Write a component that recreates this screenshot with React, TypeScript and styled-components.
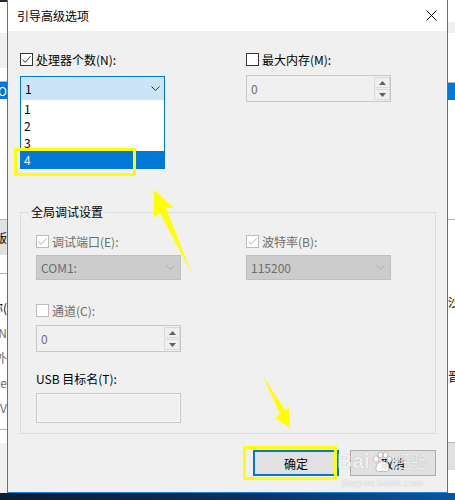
import React from 'react';
import styled, { createGlobalStyle } from 'styled-components';

const GlobalStyle = createGlobalStyle`
  html, body {
    margin: 0;
    padding: 0;
    background: #fff;
  }
  body {
    font-family: "Noto Sans CJK SC", "Noto Sans", sans-serif;
    font-size: 12px;
    color: #000;
  }
`;

const Screen = styled.div`
  position: relative;
  width: 455px;
  height: 500px;
  overflow: hidden;
  display: grid;
  grid-template-columns: 7px 441px 7px;
  grid-template-rows: 493px 7px;
  background: #fff;
`;

type Tone = 'white' | 'panel' | 'gray' | 'blue' | 'dark' | 'line';

const toneBg: Record<Tone, string> = {
  white: '#ffffff',
  panel: '#f0f0f0',
  gray: '#e1e1e1',
  blue: '#0078d7',
  dark: '#1d2b3c',
  line: '#b4b4b4',
};

const Strip = styled.div<{ $side: 'left' | 'right' }>`
  display: flex;
  flex-direction: column;
  overflow: hidden;
  align-items: ${(p) => (p.$side === 'left' ? 'flex-end' : 'flex-start')};
`;

const Band = styled.div<{ $h: number; $tone: Tone; $muted?: boolean }>`
  flex: none;
  width: 30px;
  height: ${(p) => p.$h}px;
  background: ${(p) => toneBg[p.$tone]};
  display: flex;
  align-items: center;
  justify-content: inherit;
  white-space: nowrap;
  font-size: 12px;
  line-height: 14px;
  color: ${(p) => (p.$tone === 'blue' ? '#fff' : p.$muted ? '#6d6d6d' : '#000')};
`;

const LeftBand = styled(Band)`
  justify-content: flex-end;
`;

const Taskbar = styled.div`
  grid-column: 1 / -1;
  background: linear-gradient(90deg, #0a1d36 0%, #0c2f5c 50%, #0a56a0 100%);
`;

const Dialog = styled.div`
  display: flex;
  flex-direction: column;
  border: 1px solid #1883d7;
  border-top: none;
  min-height: 0;
`;

const TitleBar = styled.div`
  height: 31px;
  flex: none;
  background: #fff;
  display: flex;
  align-items: center;
  justify-content: space-between;
  padding: 0 10px 0 9px;
`;

const Title = styled.span`
  font-size: 12px;
  line-height: 16px;
`;

const Body = styled.div`
  position: relative;
  flex: 1;
  background: #f0f0f0;
  padding: 22px 11px 0 12px;
  display: flex;
  flex-direction: column;
`;

const TwoCols = styled.div<{ $gap: number }>`
  display: grid;
  grid-template-columns: 145px 145px;
  column-gap: ${(p) => p.$gap}px;
  align-items: start;
`;

const Field = styled.div<{ $gap: number; $top?: number }>`
  display: flex;
  flex-direction: column;
  gap: ${(p) => p.$gap}px;
  margin-top: ${(p) => p.$top ?? 0}px;
  width: 145px;
`;

const CheckRow = styled.label<{ $disabled?: boolean }>`
  display: flex;
  align-items: center;
  gap: 3px;
  height: 13px;
  line-height: 14px;
  white-space: nowrap;
  color: ${(p) => (p.$disabled ? '#6d6d6d' : '#000')};
`;

const Box = styled.span<{ $disabled?: boolean }>`
  box-sizing: border-box;
  width: 13px;
  height: 13px;
  flex: none;
  background: #fff;
  border: 1px solid ${(p) => (p.$disabled ? '#bcbcbc' : '#333')};
  display: grid;
  place-items: center;
`;

const Combo = styled.div<{ $open?: boolean; $disabled?: boolean }>`
  position: relative;
  box-sizing: border-box;
  height: 25px;
  display: flex;
  align-items: center;
  justify-content: space-between;
  padding: 0 ${(p) => (p.$disabled ? 5 : 4)}px 0 4px;
  background: ${(p) => (p.$open ? '#cce4f7' : p.$disabled ? '#cccccc' : '#e1e1e1')};
  border: 1px solid ${(p) => (p.$open ? '#0078d7' : p.$disabled ? '#bfbfbf' : '#adadad')};
  color: ${(p) => (p.$disabled ? '#6d6d6d' : '#000')};
  font-size: 12px;
`;

const DropList = styled.ul`
  position: absolute;
  left: -1px;
  right: -1px;
  top: 100%;
  margin: 0;
  padding: 0;
  list-style: none;
  background: #fff;
  border: 1px solid #0078d7;
  border-top: none;
  z-index: 2;
`;

const DropItem = styled.li<{ $selected?: boolean }>`
  height: 17px;
  line-height: 17px;
  padding-left: 3px;
  background: ${(p) => (p.$selected ? '#0078d7' : '#fff')};
  color: ${(p) => (p.$selected ? '#fff' : '#000')};
`;

const Spin = styled.div<{ $h: number }>`
  box-sizing: border-box;
  height: ${(p) => p.$h}px;
  display: flex;
  align-items: stretch;
  background: #f0f0f0;
  border: 1px solid #c8c8c8;
  color: #6d6d6d;
`;

const SpinValue = styled.span`
  flex: 1;
  display: flex;
  align-items: center;
  padding-left: 4px;
`;

const SpinButtons = styled.div`
  width: 16px;
  display: flex;
  flex-direction: column;
  gap: 1px;
  padding: 1px 0 1px 0;
`;

const SpinButton = styled.div`
  flex: 1;
  box-sizing: border-box;
  border: 1px solid #dadada;
  display: grid;
  place-items: center;
`;

const GroupBox = styled.div`
  position: relative;
  margin-top: 110px;
  border: 1px solid #dcdcdc;
  padding: 22px 0 10px 15px;
  display: flex;
  flex-direction: column;
`;

const GroupTitle = styled.span`
  position: absolute;
  top: -9px;
  left: 8px;
  padding: 0 2px;
  background: #f0f0f0;
  line-height: 16px;
`;

const PlainLabel = styled.span`
  height: 14px;
  line-height: 14px;
  white-space: nowrap;
`;

const TextBox = styled.div`
  box-sizing: border-box;
  height: 30px;
  background: #f0f0f0;
  border: 1px solid #c8c8c8;
  box-shadow: inset 0 0 0 1px #f7f7f7;
`;

const ButtonRow = styled.div`
  display: flex;
  justify-content: flex-end;
  gap: 11px;
  margin-top: 16px;
`;

const Button = styled.button<{ $default?: boolean }>`
  box-sizing: border-box;
  width: 86px;
  height: 26px;
  padding: 0;
  background: #e1e1e1;
  border: ${(p) => (p.$default ? '2px solid #0078d7' : '1px solid #adadad')};
  font-family: inherit;
  font-size: 12px;
  color: #000;
`;

const Annotations = styled.svg`
  position: absolute;
  left: 0;
  top: 0;
  pointer-events: none;
  z-index: 5;
`;

const Watermark = styled.div`
  position: absolute;
  left: 337px;
  top: 449px;
  display: flex;
  flex-direction: column;
  align-items: center;
  color: rgba(255, 255, 255, 0.85);
  text-shadow: 0 0 1px rgba(0, 0, 0, 0.3);
  pointer-events: none;
  z-index: 4;
`;

const MarkLogo = styled.div`
  display: flex;
  align-items: flex-end;
  gap: 1px;
  font-family: "Liberation Sans", sans-serif;
  font-size: 21px;
  font-weight: bold;
  line-height: 24px;
`;

const MarkCn = styled.span`
  font-family: "Noto Sans CJK SC", sans-serif;
  font-size: 17px;
  font-weight: normal;
`;

const MarkUrl = styled.div`
  font-family: "Liberation Serif", serif;
  font-size: 11px;
  line-height: 12px;
  margin-top: 3px;
`;

const Check = ({ disabled }: { disabled?: boolean }) => (
  <svg width="11" height="11" viewBox="0 0 11 11">
    <path d="M1.5 5.5 L4.2 8.3 L9.6 2.2" fill="none" stroke={disabled ? '#bcbcbc' : '#3c3c3c'} strokeWidth="1" />
  </svg>
);

const Chevron = ({ color }: { color: string }) => (
  <svg width="9" height="5" viewBox="0 0 9 5">
    <path d="M0.5 0.5 L4.5 4.5 L8.5 0.5" fill="none" stroke={color} strokeWidth="1" />
  </svg>
);

const Tri = ({ up }: { up?: boolean }) => (
  <svg width="7" height="4" viewBox="0 0 7 4">
    <polygon points={up ? '0,4 3.5,0 7,4' : '0,0 3.5,4 7,0'} fill="#606060" />
  </svg>
);

const SpinBox = ({ h }: { h: number }) => (
  <Spin $h={h}>
    <SpinValue>0</SpinValue>
    <SpinButtons>
      <SpinButton>
        <Tri up />
      </SpinButton>
      <SpinButton>
        <Tri />
      </SpinButton>
    </SpinButtons>
  </Spin>
);

const leftBands: { h: number; tone: Tone; text?: string; muted?: boolean }[] = [
  { h: 2, tone: 'dark' },
  { h: 31, tone: 'white' },
  { h: 35, tone: 'panel' },
  { h: 13, tone: 'white' },
  { h: 1, tone: 'line' },
  { h: 17, tone: 'blue', text: 'KO' },
  { h: 120, tone: 'white' },
  { h: 1, tone: 'line' },
  { h: 35, tone: 'gray', text: '版' },
  { h: 18, tone: 'white' },
  { h: 1, tone: 'line' },
  { h: 21, tone: 'white' },
  { h: 25, tone: 'white', text: '称(' },
  { h: 25, tone: 'white', text: 'N', muted: true },
  { h: 25, tone: 'white', text: '外', muted: true },
  { h: 25, tone: 'white', text: 'e', muted: true },
  { h: 25, tone: 'white', text: 'V', muted: true },
  { h: 9, tone: 'white' },
  { h: 1, tone: 'line' },
  { h: 13, tone: 'white' },
  { h: 50, tone: 'panel' },
];

const rightBands: { h: number; tone: Tone; text?: string }[] = [
  { h: 22, tone: 'white' },
  { h: 11, tone: 'panel' },
  { h: 49, tone: 'white' },
  { h: 1, tone: 'line' },
  { h: 17, tone: 'blue' },
  { h: 119, tone: 'white' },
  { h: 1, tone: 'line' },
  { h: 72, tone: 'white' },
  { h: 20, tone: 'white', text: '沙' },
  { h: 55, tone: 'white' },
  { h: 20, tone: 'white', text: '晋' },
  { h: 55, tone: 'white' },
  { h: 1, tone: 'line' },
  { h: 27, tone: 'gray' },
  { h: 23, tone: 'white' },
];

const cpuOptions = ['1', '2', '3', '4'];

function App() {
  return (
    <>
      <GlobalStyle />
      <Screen>
        <Strip $side="left">
          {leftBands.map((b, i) => (
            <LeftBand key={i} $h={b.h} $tone={b.tone} $muted={b.muted}>
              {b.text}
            </LeftBand>
          ))}
        </Strip>

        <Dialog>
          <TitleBar>
            <Title>引导高级选项</Title>
            <svg width="11" height="11" viewBox="0 0 11 11">
              <path d="M0.5 0.5 L10.5 10.5 M10.5 0.5 L0.5 10.5" stroke="#000" strokeWidth="1" />
            </svg>
          </TitleBar>

          <Body>
            <TwoCols $gap={81}>
              <Field $gap={10}>
                <CheckRow>
                  <Box>
                    <Check />
                  </Box>
                  处理器个数(N):
                </CheckRow>
                <Combo $open>
                  <span>1</span>
                  <Chevron color="#333" />
                  <DropList>
                    {cpuOptions.map((o) => (
                      <DropItem key={o} $selected={o === '4'}>
                        {o}
                      </DropItem>
                    ))}
                  </DropList>
                </Combo>
              </Field>
              <Field $gap={9}>
                <CheckRow>
                  <Box />
                  最大内存(M):
                </CheckRow>
                <SpinBox h={27} />
              </Field>
            </TwoCols>

            <GroupBox>
              <GroupTitle>全局调试设置</GroupTitle>
              <TwoCols $gap={65}>
                <Field $gap={7}>
                  <CheckRow $disabled>
                    <Box $disabled>
                      <Check disabled />
                    </Box>
                    调试端口(E):
                  </CheckRow>
                  <Combo $disabled>
                    <span>COM1:</span>
                    <Chevron color="#a8a8a8" />
                  </Combo>
                </Field>
                <Field $gap={7}>
                  <CheckRow $disabled>
                    <Box $disabled>
                      <Check disabled />
                    </Box>
                    波特率(B):
                  </CheckRow>
                  <Combo $disabled>
                    <span>115200</span>
                    <Chevron color="#a8a8a8" />
                  </Combo>
                </Field>
              </TwoCols>

              <Field $gap={8} $top={24}>
                <CheckRow $disabled>
                  <Box $disabled />
                  通道(C):
                </CheckRow>
                <SpinBox h={27} />
              </Field>

              <Field $gap={7} $top={20}>
                <PlainLabel>USB 目标名(T):</PlainLabel>
                <TextBox />
              </Field>
            </GroupBox>

            <ButtonRow>
              <Button $default>确定</Button>
              <Button>取消</Button>
            </ButtonRow>
          </Body>
        </Dialog>

        <Strip $side="right">
          {rightBands.map((b, i) => (
            <Band key={i} $h={b.h} $tone={b.tone}>
              {b.text}
            </Band>
          ))}
        </Strip>

        <Taskbar />

        <Watermark>
          <MarkLogo>
            <span>Bai</span>
            <svg width="22" height="22" viewBox="0 0 22 22">
              <g fill="rgba(255,255,255,0.85)" stroke="rgba(0,0,0,0.25)" strokeWidth="0.8">
                <ellipse cx="5" cy="8" rx="2.6" ry="3.2" />
                <ellipse cx="9.5" cy="4" rx="2.4" ry="3" />
                <ellipse cx="14.5" cy="4" rx="2.4" ry="3" />
                <ellipse cx="18.5" cy="8.5" rx="2.5" ry="3" />
                <path d="M5 18 C5 12 9 10 11.5 10 C15 10 18 13 18 18 C18 21 15 21 11.5 20 C8 21 5 21 5 18 Z" />
              </g>
            </svg>
            <MarkCn>经验</MarkCn>
          </MarkLogo>
          <MarkUrl>jingyan.baidu.com</MarkUrl>
        </Watermark>

        <Annotations width="455" height="500" viewBox="0 0 455 500">
          <rect x="15.5" y="149.5" width="119" height="25" fill="none" stroke="#ffff00" strokeWidth="3" />
          <rect x="244.5" y="447.5" width="91" height="31" fill="none" stroke="#ffff00" strokeWidth="3" />
          <polygon points="154,190 174,208 166,208 192,274 160,213 154,218" fill="#ffff00" />
          <polygon points="263,376 285,410 289,408 290,428 275,418 280,414" fill="#ffff00" />
        </Annotations>
      </Screen>
    </>
  );
}

export default App;
